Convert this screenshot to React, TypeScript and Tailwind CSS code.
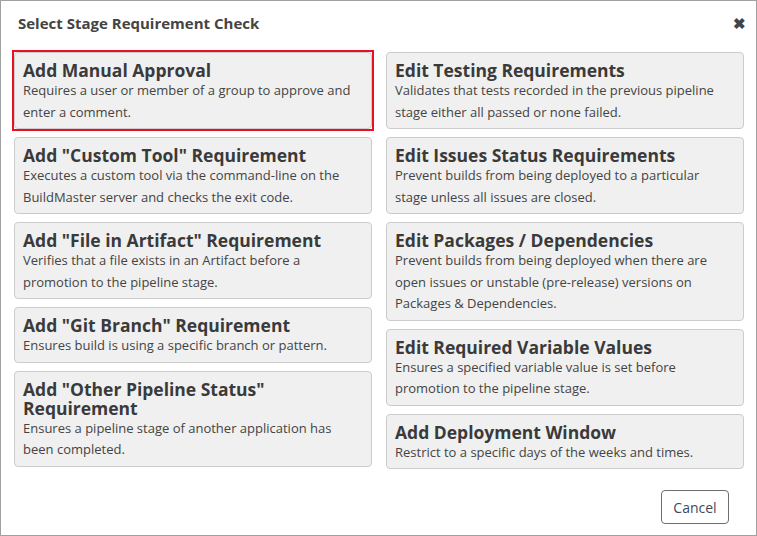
import * as React from 'react';

interface Item {
  title: string;
  text: string;
  selected?: boolean;
}

const left: Item[] = [
  {
    title: 'Add Manual Approval',
    text: 'Requires a user or member of a group to approve and enter a comment.',
    selected: true,
  },
  {
    title: 'Add "Custom Tool" Requirement',
    text: 'Executes a custom tool via the command-line on the BuildMaster server and checks the exit code.',
  },
  {
    title: 'Add "File in Artifact" Requirement',
    text: 'Verifies that a file exists in an Artifact before a promotion to the pipeline stage.',
  },
  {
    title: 'Add "Git Branch" Requirement',
    text: 'Ensures build is using a specific branch or pattern.',
  },
  {
    title: 'Add "Other Pipeline Status" Requirement',
    text: 'Ensures a pipeline stage of another application has been completed.',
  },
];

const right: Item[] = [
  {
    title: 'Edit Testing Requirements',
    text: 'Validates that tests recorded in the previous pipeline stage either all passed or none failed.',
  },
  {
    title: 'Edit Issues Status Requirements',
    text: 'Prevent builds from being deployed to a particular stage unless all issues are closed.',
  },
  {
    title: 'Edit Packages / Dependencies',
    text: 'Prevent builds from being deployed when there are open issues or unstable (pre-release) versions on Packages & Dependencies.',
  },
  {
    title: 'Edit Required Variable Values',
    text: 'Ensures a specified variable value is set before promotion to the pipeline stage.',
  },
  {
    title: 'Add Deployment Window',
    text: 'Restrict to a specific days of the weeks and times.',
  },
];

const Card = ({ item }: { item: Item }) => (
  <button className="relative block w-full rounded-[4px] border border-[#cccccc] bg-[#f0f0f0] px-2 pt-[8px] pb-[5px] text-left">
    {item.selected && (
      <span className="pointer-events-none absolute -inset-[3px] border-2 border-[#e81123]" />
    )}
    <div className="text-[17.5px] leading-[19px] font-bold text-[#3a3a3a]">{item.title}</div>
    <div className="text-[13px] leading-[21.5px] text-[#444444]">{item.text}</div>
  </button>
);

export default function App() {
  return (
    <div
      className="h-[536px] w-[757px] border border-[#a0a0a0] bg-white"
      style={{ fontFamily: '"Segoe UI", "Open Sans", "Noto Sans", sans-serif' }}
    >
      <div className="flex h-[46px] items-center justify-between pr-[10px] pb-[2px] pl-[17px]">
        <h1 className="text-[15px] font-bold text-[#444444]">Select Stage Requirement Check</h1>
        <span className="text-[15px] font-bold text-[#444444]">✖</span>
      </div>
      <div className="mt-[5px] grid grid-cols-2 gap-x-[14px] pr-[12px] pl-[13px]">
        <div className="flex flex-col gap-[8px]">
          {left.map((it) => (
            <Card key={it.title} item={it} />
          ))}
        </div>
        <div className="flex flex-col gap-[8px]">
          {right.map((it) => (
            <Card key={it.title} item={it} />
          ))}
        </div>
      </div>
      <div className="flex justify-end pt-[21px] pr-[27px]">
        <button className="h-[34px] w-[68px] rounded-[4px] border border-[#6e6e6e] text-[14px] text-[#3d4a5c]">
          Cancel
        </button>
      </div>
    </div>
  );
}
